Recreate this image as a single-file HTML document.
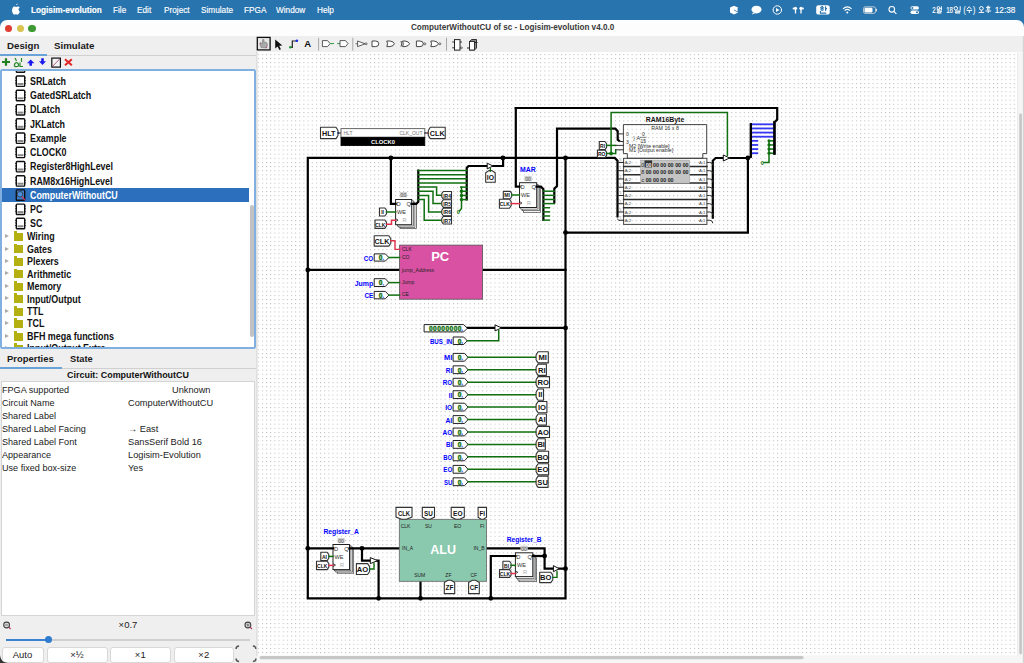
<!DOCTYPE html>
<html><head><meta charset="utf-8">
<style>
*{margin:0;padding:0;box-sizing:border-box}
html,body{width:1024px;height:663px;overflow:hidden;background:#ececec;font-family:"Liberation Sans",sans-serif;color:#222}
.a{position:absolute}
#menubar{left:0;top:0;width:1024px;height:19px;background:#2874ae;color:#fff;font-size:8.8px}
#menubar span{position:absolute;top:4.8px;line-height:10px;white-space:nowrap;transform:scaleX(0.935);transform-origin:0 0;-webkit-text-stroke:0.15px #fff}
#titlebar{left:0;top:19.5px;width:1024px;height:17px;background:#fdfdfd;border-bottom:0.6px solid #e6e6e6;border-radius:7px 7px 0 0}
.tl{position:absolute;top:24.5px;width:7.4px;height:7.4px;border-radius:50%}
#title{position:absolute;left:411px;top:22.3px;font-size:8.9px;font-weight:bold;color:#3a3a3a;line-height:11px;white-space:nowrap;transform:scaleX(0.914);transform-origin:0 0}
#left{left:0;top:36px;width:256px;height:627px;background:#efefef}
.tab{position:absolute;font-weight:bold;font-size:9.7px;color:#1a1a1a;line-height:12px}
#list{left:0;top:69px;width:256px;height:280px;border:2px solid #7fb0e0;border-radius:2px}
#listwrap{background:#fff}
.li{position:absolute;left:30px;font-size:10.1px;font-weight:bold;color:#111;line-height:12px;white-space:nowrap;transform:scaleX(0.88);transform-origin:0 0;margin-top:0.7px}
.fo{position:absolute;left:27px;font-size:10.1px;font-weight:bold;color:#111;line-height:12px;white-space:nowrap;transform:scaleX(0.886);transform-origin:0 0;margin-top:0.5px}
.ic{position:absolute;left:15px;width:9px;height:10px;border:1.6px solid #222;border-radius:1px;background:#fff}
.fic{position:absolute;left:13.9px;width:9.1px;height:8px;background:#b4b012}
.fic:before{content:'';position:absolute;left:0;top:-1.8px;width:3.3px;height:2px;background:#b4b012}
.arr{position:absolute;left:4.6px;width:0;height:0;border-left:4.5px solid #aaa;border-top:2.4px solid transparent;border-bottom:2.4px solid transparent}
.pr{position:absolute;left:2px;font-size:9.9px;color:#1a1a1a;line-height:11px;white-space:nowrap;transform:scaleX(0.92);transform-origin:0 0}
.pv{position:absolute;left:128px;font-size:9.9px;color:#1a1a1a;line-height:11px;white-space:nowrap;transform:scaleX(0.935);transform-origin:0 0}
.btn{position:absolute;top:647px;height:16px;background:#fff;border:1px solid #d8d8d8;border-radius:3px;font-size:9.5px;text-align:center;line-height:14px;color:#222}
#canvas{left:257px;top:52px;width:767px;height:611px;background:#fff}
#toolbar{left:256px;top:36px;width:768px;height:17px;background:#efefef;border-bottom:1px solid #d0d0d0}
</style></head><body>
<div id="menubar" class="a">
<span style="left:31.2px;font-weight:bold">Logisim-evolution</span>
<span style="left:112.7px">File</span>
<span style="left:136.7px">Edit</span>
<span style="left:163.7px">Project</span>
<span style="left:200.7px">Simulate</span>
<span style="left:244.2px">FPGA</span>
<span style="left:276.2px">Window</span>
<span style="left:317.2px">Help</span>
</div>
<div class="a" style="left:0;top:19px;width:1024px;height:8px;background:#2874ae"></div>
<div id="titlebar" class="a"></div>
<div class="tl" style="left:4.8px;background:#e03c30"></div>
<div class="tl" style="left:16.6px;background:#d8c44e"></div>
<div class="tl" style="left:28.3px;background:#3d9a32"></div>
<div id="title">ComputerWithoutCU of sc - Logisim-evolution v4.0.0</div>

<div id="left" class="a">
</div>
<div class="tab" style="left:7px;top:40px">Design</div>
<div class="tab" style="left:54px;top:40px">Simulate</div>
<div class="a" style="left:0;top:54px;width:47px;height:2px;background:#6aa3d8"></div>
<div class="a" style="left:47px;top:55px;width:209px;height:1px;background:#d0d0d0"></div>

<div id="listwrap" class="a" style="left:0;top:69px;width:256px;height:280px;overflow:hidden">
<div class="a" style="left:0;top:-69px;width:256px;height:663px">
<div class="a" style="left:2px;top:188.2px;width:246.5px;height:13.5px;background:#2c6fbd"></div>

<div class="li" style="top:75.2px;color:#111">SRLatch</div>
<div class="li" style="top:89.5px;color:#111">GatedSRLatch</div>
<div class="li" style="top:103.8px;color:#111">DLatch</div>
<div class="li" style="top:118.0px;color:#111">JKLatch</div>
<div class="li" style="top:132.2px;color:#111">Example</div>
<div class="li" style="top:146.4px;color:#111">CLOCK0</div>
<div class="li" style="top:160.7px;color:#111">Register8HighLevel</div>
<div class="li" style="top:174.9px;color:#111">RAM8x16HighLevel</div>
<div class="li" style="top:189.1px;color:#fff">ComputerWithoutCU</div>
<div class="li" style="top:203.3px;color:#111">PC</div>
<div class="li" style="top:217.5px;color:#111">SC</div>
<div class="arr" style="top:234.1px"></div><div class="fic" style="top:233.0px"></div><div class="fo" style="top:230.8px">Wiring</div>
<div class="arr" style="top:246.5px"></div><div class="fic" style="top:245.4px"></div><div class="fo" style="top:243.2px">Gates</div>
<div class="arr" style="top:259.0px"></div><div class="fic" style="top:257.9px"></div><div class="fo" style="top:255.7px">Plexers</div>
<div class="arr" style="top:271.4px"></div><div class="fic" style="top:270.3px"></div><div class="fo" style="top:268.1px">Arithmetic</div>
<div class="arr" style="top:283.9px"></div><div class="fic" style="top:282.8px"></div><div class="fo" style="top:280.6px">Memory</div>
<div class="arr" style="top:296.3px"></div><div class="fic" style="top:295.2px"></div><div class="fo" style="top:293.0px">Input/Output</div>
<div class="arr" style="top:308.8px"></div><div class="fic" style="top:307.7px"></div><div class="fo" style="top:305.5px">TTL</div>
<div class="arr" style="top:321.2px"></div><div class="fic" style="top:320.1px"></div><div class="fo" style="top:317.9px">TCL</div>
<div class="arr" style="top:333.7px"></div><div class="fic" style="top:332.6px"></div><div class="fo" style="top:330.4px">BFH mega functions</div>
<div class="arr" style="top:346.1px"></div><div class="fic" style="top:345.0px"></div><div class="fo" style="top:342.8px">Input/Output Extra</div>
<div class="a" style="left:249.5px;top:204.5px;width:4px;height:132px;border-radius:2px;background:#c2c2c2"></div>
</div></div>
<div id="list" class="a"></div>

<div class="tab" style="left:7px;top:353px;font-size:9.45px">Properties</div>
<div class="tab" style="left:70px;top:353px;font-size:9.3px">State</div>
<div class="a" style="left:0;top:367px;width:62px;height:2px;background:#6aa3d8"></div>
<div class="a" style="left:62px;top:368px;width:194px;height:1px;background:#d0d0d0"></div>
<div class="a" style="left:0;top:369px;width:256px;text-align:center;font-size:8.93px;font-weight:bold;line-height:12px;color:#111">Circuit: ComputerWithoutCU</div>
<div class="a" style="left:1px;top:381px;width:254px;height:235px;background:#fff;border:1px solid #d4d4d4"></div>
<div class="pr" style="top:383.5px">FPGA supported</div><div class="pv" style="top:383.5px;left:172px">Unknown</div>
<div class="pr" style="top:396.5px">Circuit Name</div><div class="pv" style="top:396.5px">ComputerWithoutCU</div>
<div class="pr" style="top:409.5px">Shared Label</div>
<div class="pr" style="top:422.5px">Shared Label Facing</div><div class="pv" style="top:422.5px">&#8594; East</div>
<div class="pr" style="top:435.5px">Shared Label Font</div><div class="pv" style="top:435.5px">SansSerif Bold 16</div>
<div class="pr" style="top:448.5px">Appearance</div><div class="pv" style="top:448.5px">Logisim-Evolution</div>
<div class="pr" style="top:461.5px">Use fixed box-size</div><div class="pv" style="top:461.5px">Yes</div>

<div class="a" style="left:0;top:619px;width:256px;text-align:center;font-size:9.5px;line-height:12px">×0.7</div>
<div class="a" style="left:6px;top:639px;width:244px;height:1.5px;background:#cfcfcf"></div>
<div class="a" style="left:6px;top:639px;width:42px;height:1.5px;background:#3b82d0"></div>
<div class="a" style="left:44.5px;top:636px;width:7px;height:7px;border-radius:50%;background:#2f7bd0"></div>
<div class="btn" style="left:1.5px;width:42px">Auto</div>
<div class="btn" style="left:46.5px;width:61px">×½</div>
<div class="btn" style="left:110px;width:60.5px">×1</div>
<div class="btn" style="left:173.5px;width:60.5px">×2</div>

<div id="toolbar" class="a"></div>
<div id="canvas" class="a"></div>





































<!--SVG--><svg class="a" style="left:0;top:0" width="1024" height="663" viewBox="0 0 1024 663" font-family="Liberation Sans, sans-serif">
<defs><pattern id="g" x="257.75" y="53.95" width="4.154" height="4.154" patternUnits="userSpaceOnUse"><rect x="0" y="0" width="1" height="1" fill="#b8b8b8"/></pattern></defs>
<rect x="257.5" y="52.7" width="759.5" height="602" fill="url(#g)"/>
<rect x="400.40000000000003" y="203.4" width="16.10" height="25.20" fill="#fff" stroke="#333" stroke-width="0.65" />
<rect x="398.8" y="202.1" width="16.10" height="25.20" fill="#fff" stroke="#333" stroke-width="0.65" />
<rect x="397.20000000000005" y="200.8" width="16.10" height="25.20" fill="#fff" stroke="#333" stroke-width="0.65" />
<rect x="395.6" y="199.5" width="16.10" height="25.20" fill="#fff" stroke="#222" stroke-width="1" />
<text x="398.6" y="204.0" font-size="5.8" font-weight="normal" fill="#333" text-anchor="middle" dominant-baseline="central" >D</text>
<text x="408.7" y="204.0" font-size="5.8" font-weight="normal" fill="#333" text-anchor="middle" dominant-baseline="central" >Q</text>
<text x="397.1" y="212.1" font-size="5.6" font-weight="normal" fill="#333" text-anchor="start" dominant-baseline="central" >WE</text>
<text x="404.455" y="220.164" font-size="5.6" font-weight="normal" fill="#aaa" text-anchor="middle" dominant-baseline="central" >R</text>
<polyline points="395.6,218.652 398.1,220.164 395.6,221.676" fill="none" stroke="#222" stroke-width="0.8"/>
<rect x="523.4" y="187.5" width="17.20" height="24.80" fill="#fff" stroke="#333" stroke-width="0.65" />
<rect x="522.1" y="185.89999999999998" width="17.20" height="24.80" fill="#fff" stroke="#333" stroke-width="0.65" />
<rect x="520.8" y="184.29999999999998" width="17.20" height="24.80" fill="#fff" stroke="#333" stroke-width="0.65" />
<rect x="519.5" y="182.7" width="17.20" height="24.80" fill="#fff" stroke="#222" stroke-width="1" />
<text x="522.5" y="187.2" font-size="5.8" font-weight="normal" fill="#333" text-anchor="middle" dominant-baseline="central" >D</text>
<text x="533.7" y="187.2" font-size="5.8" font-weight="normal" fill="#333" text-anchor="middle" dominant-baseline="central" >Q</text>
<text x="521.0" y="195.1" font-size="5.6" font-weight="normal" fill="#333" text-anchor="start" dominant-baseline="central" >WE</text>
<text x="528.96" y="203.036" font-size="5.6" font-weight="normal" fill="#aaa" text-anchor="middle" dominant-baseline="central" >R</text>
<polyline points="519.5,201.548 522.0,203.036 519.5,204.524" fill="none" stroke="#222" stroke-width="0.8"/>
<rect x="337.2" y="548.1" width="16.50" height="25.10" fill="#fff" stroke="#333" stroke-width="0.65" />
<rect x="335.8" y="546.9" width="16.50" height="25.10" fill="#fff" stroke="#333" stroke-width="0.65" />
<rect x="334.4" y="545.7" width="16.50" height="25.10" fill="#fff" stroke="#333" stroke-width="0.65" />
<rect x="333" y="544.5" width="16.50" height="25.10" fill="#fff" stroke="#222" stroke-width="1" />
<text x="336" y="549.0" font-size="5.8" font-weight="normal" fill="#333" text-anchor="middle" dominant-baseline="central" >D</text>
<text x="346.5" y="549.0" font-size="5.8" font-weight="normal" fill="#333" text-anchor="middle" dominant-baseline="central" >Q</text>
<text x="334.5" y="557.05" font-size="5.6" font-weight="normal" fill="#333" text-anchor="start" dominant-baseline="central" >WE</text>
<text x="342.075" y="565.082" font-size="5.6" font-weight="normal" fill="#aaa" text-anchor="middle" dominant-baseline="central" >R</text>
<polyline points="333,563.576 335.5,565.082 333,566.588" fill="none" stroke="#222" stroke-width="0.8"/>
<rect x="519.0" y="557.9" width="17.40" height="23.80" fill="#fff" stroke="#333" stroke-width="0.65" />
<rect x="517.8" y="556.1999999999999" width="17.40" height="23.80" fill="#fff" stroke="#333" stroke-width="0.65" />
<rect x="516.6" y="554.5" width="17.40" height="23.80" fill="#fff" stroke="#333" stroke-width="0.65" />
<rect x="515.4" y="552.8" width="17.40" height="23.80" fill="#fff" stroke="#222" stroke-width="1" />
<text x="518.4" y="557.3" font-size="5.8" font-weight="normal" fill="#333" text-anchor="middle" dominant-baseline="central" >D</text>
<text x="529.8" y="557.3" font-size="5.8" font-weight="normal" fill="#333" text-anchor="middle" dominant-baseline="central" >Q</text>
<text x="516.9" y="564.7" font-size="5.6" font-weight="normal" fill="#333" text-anchor="start" dominant-baseline="central" >WE</text>
<text x="524.9699999999999" y="572.316" font-size="5.6" font-weight="normal" fill="#aaa" text-anchor="middle" dominant-baseline="central" >R</text>
<polyline points="515.4,570.888 517.9,572.316 515.4,573.744" fill="none" stroke="#222" stroke-width="0.8"/>
<polygon points="320.5,127.3 336.0,127.3 338.0,130.464 338.0,135.43599999999998 336.0,138.6 320.5,138.6" fill="#fff" stroke="#333" stroke-width="1.1" stroke-linejoin="round"/>
<text x="328.75" y="133.25" font-size="7.2" font-weight="bold" fill="#111" text-anchor="middle" dominant-baseline="central" >HLT</text>
<circle cx="338" cy="133" r="0.9" fill="#3a6fd0"/>
<path d="M338,133 H341" fill="none" stroke="#000" stroke-width="1"  stroke-linejoin="miter" stroke-linecap="square"/>
<rect x="341" y="128.6" width="83.80" height="8.70" fill="#fff" stroke="#666" stroke-width="1" />
<rect x="341" y="137.3" width="83.80" height="8.30" fill="#000" stroke="#000" stroke-width="0.8" />
<text x="343.5" y="133.2" font-size="5" font-weight="normal" fill="#777" text-anchor="start" dominant-baseline="central" >HLT</text>
<text x="422.5" y="133.2" font-size="5" font-weight="normal" fill="#777" text-anchor="end" dominant-baseline="central" >CLK_OUT</text>
<text x="383" y="141.6" font-size="5.8" font-weight="bold" fill="#fff" text-anchor="middle" dominant-baseline="central" >CLOCK0</text>
<path d="M424.8,133 H428.3" fill="none" stroke="#000" stroke-width="1"  stroke-linejoin="miter" stroke-linecap="square"/>
<circle cx="428.3" cy="133" r="0.9" fill="#e0304a"/>
<polygon points="430.3,127.3 445.2,127.3 445.2,138.6 430.3,138.6 428.3,135.43599999999998 428.3,130.464" fill="#fff" stroke="#333" stroke-width="1.1" stroke-linejoin="round"/>
<text x="437.25" y="133.25" font-size="7.2" font-weight="bold" fill="#111" text-anchor="middle" dominant-baseline="central" >CLK</text>
<path d="M307.8,598.3 V157.9 H614.8 L617.5,160.8 V217.5" fill="none" stroke="#000" stroke-width="2.2" stroke-linejoin="miter"/>
<path d="M565.5,157.9 V598.3 H307.8" fill="none" stroke="#000" stroke-width="2.2"  stroke-linejoin="miter" stroke-linecap="square"/>
<path d="M565.5,232.6 H747.9 V158" fill="none" stroke="#000" stroke-width="2.2"  stroke-linejoin="miter" stroke-linecap="square"/>
<path d="M307.8,269.9 H399.6 M482.6,269.9 H565.5" fill="none" stroke="#000" stroke-width="2.2"  stroke-linejoin="miter" stroke-linecap="square"/>
<path d="M467.3,327.9 H495 M501.3,327.9 H565.6" fill="none" stroke="#000" stroke-width="2.2"  stroke-linejoin="miter" stroke-linecap="square"/>
<path d="M390.9,157.9 V203.9 H395.6" fill="none" stroke="#000" stroke-width="2.2"  stroke-linejoin="miter" stroke-linecap="square"/>
<path d="M411.7,203.9 H416.3 L418.3,201.9 V170.5" fill="none" stroke="#000" stroke-width="2.2"  stroke-linejoin="miter" stroke-linecap="square"/>
<path d="M466.7,199.5 V168 L468.5,166 H487.2 M493,166 H503.1 V157.9" fill="none" stroke="#000" stroke-width="2.2"  stroke-linejoin="miter" stroke-linecap="square"/>
<polygon points="487.2,163.2 493,166 487.2,168.8" fill="#fff" stroke="#111" stroke-width="1"/>
<path d="M515.8,108 V186.7 H519.5" fill="none" stroke="#000" stroke-width="2.2"  stroke-linejoin="miter" stroke-linecap="square"/>
<path d="M515.8,108 H777.2 V119.6 L774.6,122.2 V153.6" fill="none" stroke="#000" stroke-width="2.2"  stroke-linejoin="miter" stroke-linecap="square"/>
<path d="M536.7,186.7 H541 L543.4,189.1 V219.8" fill="none" stroke="#000" stroke-width="2.2"  stroke-linejoin="miter" stroke-linecap="square"/>
<path d="M554.3,203.6 V188.6 L557,186 V128.7 H615.4 L617.7,131.2 V139.7 L619.8,141.4" fill="none" stroke="#000" stroke-width="2.2" stroke-linejoin="miter"/>
<path d="M618,133.9 H623.4 M619.8,141.5 H623.4" fill="none" stroke="#333" stroke-width="1"  stroke-linejoin="miter" stroke-linecap="square"/>
<path d="M712.8,218.8 V160.8 L715.6,158 H723.3 M729.2,158 H747.9" fill="none" stroke="#000" stroke-width="2.2" stroke-linejoin="miter"/>
<polygon points="723.3,155.0 729.5,158 723.3,161.0" fill="#fff" stroke="#111" stroke-width="1"/>
<path d="M750.9,124.3 V156.6 L748.5,158" fill="none" stroke="#000" stroke-width="2.2"  stroke-linejoin="miter" stroke-linecap="square"/>
<path d="M307.8,548.3 H333 M349.5,548.3 H399.8 M362,548.3 V560.6 H370.3 M377.2,560.6 H378.6 V598.3" fill="none" stroke="#000" stroke-width="2.2"  stroke-linejoin="miter" stroke-linecap="square"/>
<polygon points="370.3,557.6 377.6,560.6 370.3,563.6" fill="#fff" stroke="#111" stroke-width="1"/>
<path d="M420.5,581.3 V598.3" fill="none" stroke="#000" stroke-width="2.2"  stroke-linejoin="miter" stroke-linecap="square"/>
<path d="M486.5,548.3 H544.6 V568.7 H553.6 M558.8,568.7 H565.5" fill="none" stroke="#000" stroke-width="2.2"  stroke-linejoin="miter" stroke-linecap="square"/>
<polygon points="553.4,565.7 559.2,568.7 553.4,571.7" fill="#fff" stroke="#111" stroke-width="1"/>
<path d="M532.8,556 H544.6" fill="none" stroke="#000" stroke-width="2.2"  stroke-linejoin="miter" stroke-linecap="square"/>
<path d="M490.8,598.3 V556 H515.4" fill="none" stroke="#000" stroke-width="2.2"  stroke-linejoin="miter" stroke-linecap="square"/>
<polygon points="495,324.9 501.5,327.9 495,330.9" fill="#fff" stroke="#111" stroke-width="1"/>
<circle cx="390.9" cy="157.9" r="2.4" fill="#000"/>
<circle cx="502.9" cy="157.9" r="2.4" fill="#000"/>
<circle cx="565.5" cy="157.9" r="2.4" fill="#000"/>
<circle cx="565.5" cy="232.6" r="2.4" fill="#000"/>
<circle cx="307.8" cy="269.9" r="2.4" fill="#000"/>
<circle cx="565.6" cy="327.9" r="2.4" fill="#000"/>
<circle cx="307.8" cy="548.3" r="2.4" fill="#000"/>
<circle cx="362" cy="548.3" r="2.4" fill="#000"/>
<circle cx="378.6" cy="598.3" r="2.4" fill="#000"/>
<circle cx="420.5" cy="598.3" r="2.4" fill="#000"/>
<circle cx="490.8" cy="598.3" r="2.4" fill="#000"/>
<circle cx="544.6" cy="556" r="2.4" fill="#000"/>
<circle cx="565.5" cy="568.7" r="2.4" fill="#000"/>
<circle cx="747.9" cy="158" r="2.4" fill="#000"/>
<rect x="399.79999999999995" y="192.1" width="7.20" height="5.20" fill="#cfcfcf" stroke="none" stroke-width="0" />
<text x="403.4" y="194.89999999999998" font-size="5" font-weight="normal" fill="#555" text-anchor="middle" dominant-baseline="central" >00</text>
<path d="M418.3,170.50 H466.7" fill="none" stroke="#107010" stroke-width="1.5"  stroke-linejoin="miter" stroke-linecap="square"/>
<path d="M418.3,174.65 H466.7" fill="none" stroke="#107010" stroke-width="1.5"  stroke-linejoin="miter" stroke-linecap="square"/>
<path d="M418.3,178.81 H466.7" fill="none" stroke="#107010" stroke-width="1.5"  stroke-linejoin="miter" stroke-linecap="square"/>
<path d="M418.3,182.96 H466.7" fill="none" stroke="#107010" stroke-width="1.5"  stroke-linejoin="miter" stroke-linecap="square"/>
<path d="M418.3,187.12 H436.6 V195.3 H441.8" fill="none" stroke="#107010" stroke-width="1.5"  stroke-linejoin="miter" stroke-linecap="square"/>
<polygon points="443.32,191.5 451.5,191.5 451.5,199.10000000000002 443.32,199.10000000000002 441.8,196.972 441.8,193.62800000000001" fill="#fff" stroke="#333" stroke-width="1.1" stroke-linejoin="round"/>
<text x="447.03" y="195.60000000000002" font-size="5" font-weight="bold" fill="#111" text-anchor="middle" dominant-baseline="central" >IR4</text>
<path d="M418.3,191.27 H433 V203.6 H441.8" fill="none" stroke="#107010" stroke-width="1.5"  stroke-linejoin="miter" stroke-linecap="square"/>
<polygon points="443.32,199.79999999999998 451.5,199.79999999999998 451.5,207.4 443.32,207.4 441.8,205.272 441.8,201.928" fill="#fff" stroke="#333" stroke-width="1.1" stroke-linejoin="round"/>
<text x="447.03" y="203.9" font-size="5" font-weight="bold" fill="#111" text-anchor="middle" dominant-baseline="central" >IR5</text>
<path d="M418.3,195.42 H428.6 V211.9 H441.8" fill="none" stroke="#107010" stroke-width="1.5"  stroke-linejoin="miter" stroke-linecap="square"/>
<polygon points="443.32,208.1 451.5,208.1 451.5,215.70000000000002 443.32,215.70000000000002 441.8,213.572 441.8,210.228" fill="#fff" stroke="#333" stroke-width="1.1" stroke-linejoin="round"/>
<text x="447.03" y="212.20000000000002" font-size="5" font-weight="bold" fill="#111" text-anchor="middle" dominant-baseline="central" >IR6</text>
<path d="M418.3,199.58 H424.2 V220.2 H441.8" fill="none" stroke="#107010" stroke-width="1.5"  stroke-linejoin="miter" stroke-linecap="square"/>
<polygon points="443.32,216.39999999999998 451.5,216.39999999999998 451.5,224.0 443.32,224.0 441.8,221.87199999999999 441.8,218.528" fill="#fff" stroke="#333" stroke-width="1.1" stroke-linejoin="round"/>
<text x="447.03" y="220.5" font-size="5" font-weight="bold" fill="#111" text-anchor="middle" dominant-baseline="central" >IR7</text>
<path d="M460.8,187.12 H466.7" fill="none" stroke="#107010" stroke-width="1.5"  stroke-linejoin="miter" stroke-linecap="square"/>
<path d="M460.8,191.27 H466.7" fill="none" stroke="#107010" stroke-width="1.5"  stroke-linejoin="miter" stroke-linecap="square"/>
<path d="M460.8,195.42 H466.7" fill="none" stroke="#107010" stroke-width="1.5"  stroke-linejoin="miter" stroke-linecap="square"/>
<path d="M460.8,199.58 H466.7" fill="none" stroke="#107010" stroke-width="1.5"  stroke-linejoin="miter" stroke-linecap="square"/>
<path d="M461.5,187.12 V208.6 L459.5,211" fill="none" stroke="#107010" stroke-width="1.5"  stroke-linejoin="miter" stroke-linecap="square"/>
<circle cx="461.5" cy="191.27" r="1.7" fill="#107010"/>
<circle cx="461.5" cy="195.424" r="1.7" fill="#107010"/>
<circle cx="461.5" cy="199.578" r="1.7" fill="#107010"/>
<text x="458.3" y="211.5" font-size="5.5" font-weight="bold" fill="#107010" text-anchor="middle" dominant-baseline="central" >0</text>
<polygon points="485.7,182.2 495.2,182.2 495.2,172.79999999999998 491.875,170.6 489.025,170.6 485.7,172.79999999999998" fill="#fff" stroke="#333" stroke-width="1.1" stroke-linejoin="miter"/>
<text x="490.45" y="177.29999999999998" font-size="7.4" font-weight="bold" fill="#111" text-anchor="middle" dominant-baseline="central"  textLength="7.2" lengthAdjust="spacingAndGlyphs">IO</text>
<path d="M490.4,171.2 V168.5" fill="none" stroke="#107010" stroke-width="1.3"  stroke-linejoin="miter" stroke-linecap="square"/>
<polygon points="379.5,208 384.9,208 386.5,210.24 386.5,213.76 384.9,216 379.5,216" fill="#fff" stroke="#333" stroke-width="1.1" stroke-linejoin="round"/>
<text x="382.6" y="212.3" font-size="5" font-weight="bold" fill="#111" text-anchor="middle" dominant-baseline="central" >II</text>
<path d="M386.5,212 H395.6" fill="none" stroke="#107010" stroke-width="1.5"  stroke-linejoin="miter" stroke-linecap="square"/>
<polygon points="375,220 384.82,220 386.5,222.35199999999998 386.5,226.048 384.82,228.4 375,228.4" fill="#fff" stroke="#333" stroke-width="1.1" stroke-linejoin="round"/>
<text x="380.33" y="224.5" font-size="5" font-weight="bold" fill="#111" text-anchor="middle" dominant-baseline="central" >CLK</text>
<path d="M386.5,224.3 H391.5 V220.3 H395.6" fill="none" stroke="#e0304a" stroke-width="1.5"  stroke-linejoin="miter" stroke-linecap="square"/>
<rect x="524.5" y="176.0" width="7.20" height="5.20" fill="#cfcfcf" stroke="none" stroke-width="0" />
<text x="528.1" y="178.79999999999998" font-size="5" font-weight="normal" fill="#555" text-anchor="middle" dominant-baseline="central" >00</text>
<text x="527.9" y="169.8" font-size="7.4" font-weight="bold" fill="#0000ff" text-anchor="middle" dominant-baseline="central"  textLength="15.7" lengthAdjust="spacingAndGlyphs">MAR</text>
<path d="M543.6,191.20 H554.3" fill="none" stroke="#107010" stroke-width="1.5"  stroke-linejoin="miter" stroke-linecap="square"/>
<path d="M543.6,195.33 H554.3" fill="none" stroke="#107010" stroke-width="1.5"  stroke-linejoin="miter" stroke-linecap="square"/>
<path d="M543.6,199.46 H554.3" fill="none" stroke="#107010" stroke-width="1.5"  stroke-linejoin="miter" stroke-linecap="square"/>
<path d="M543.6,203.59 H554.3" fill="none" stroke="#107010" stroke-width="1.5"  stroke-linejoin="miter" stroke-linecap="square"/>
<path d="M543.6,207.72 H549.4" fill="none" stroke="#107010" stroke-width="1.5"  stroke-linejoin="miter" stroke-linecap="square"/>
<path d="M543.6,211.85 H549.4" fill="none" stroke="#107010" stroke-width="1.5"  stroke-linejoin="miter" stroke-linecap="square"/>
<path d="M543.6,215.98 H549.4" fill="none" stroke="#107010" stroke-width="1.5"  stroke-linejoin="miter" stroke-linecap="square"/>
<path d="M543.6,220.11 H549.4" fill="none" stroke="#107010" stroke-width="1.5"  stroke-linejoin="miter" stroke-linecap="square"/>
<polygon points="503.3,191.4 510.24,191.4 511.7,193.44400000000002 511.7,196.656 510.24,198.7 503.3,198.7" fill="#fff" stroke="#333" stroke-width="1.1" stroke-linejoin="round"/>
<text x="507.135" y="195.35000000000002" font-size="5" font-weight="bold" fill="#111" text-anchor="middle" dominant-baseline="central" >MI</text>
<path d="M511.7,195 H519.5" fill="none" stroke="#107010" stroke-width="1.5"  stroke-linejoin="miter" stroke-linecap="square"/>
<polygon points="499.4,199.2 509.4,199.2 511.2,201.72 511.2,205.67999999999998 509.4,208.2 499.4,208.2" fill="#fff" stroke="#333" stroke-width="1.1" stroke-linejoin="round"/>
<text x="504.84999999999997" y="204.0" font-size="5" font-weight="bold" fill="#111" text-anchor="middle" dominant-baseline="central" >CLK</text>
<path d="M511.2,203.6 H519.5" fill="none" stroke="#e0304a" stroke-width="1.5"  stroke-linejoin="miter" stroke-linecap="square"/>
<text x="665" y="119.3" font-size="7.2" font-weight="bold" fill="#111" text-anchor="middle" dominant-baseline="central"  textLength="38.5" lengthAdjust="spacingAndGlyphs">RAM16Byte</text>
<polygon points="623.4,124.6 706.7,124.6 706.7,153.6 702.8,153.6 702.8,158.3 627.3,158.3 627.3,153.6 623.4,153.6" fill="none" stroke="#444" stroke-width="1"/>
<text x="665" y="128.3" font-size="5.3" font-weight="normal" fill="#333" text-anchor="middle" dominant-baseline="central" >RAM 16 x 8</text>
<text x="626" y="134" font-size="5" font-weight="normal" fill="#333" text-anchor="start" dominant-baseline="central" >0</text>
<text x="626" y="141.8" font-size="5" font-weight="normal" fill="#333" text-anchor="start" dominant-baseline="central" >3</text>
<text x="633" y="137.5" font-size="6" font-weight="normal" fill="#555" text-anchor="start" dominant-baseline="central" >}</text>
<text x="636.5" y="137.8" font-size="5.5" font-weight="normal" fill="#333" text-anchor="start" dominant-baseline="central" >A</text>
<path d="M640.5,137.3 H646" fill="none" stroke="#333" stroke-width="0.6"  stroke-linejoin="miter" stroke-linecap="square"/>
<text x="643.3" y="133.8" font-size="5" font-weight="normal" fill="#333" text-anchor="middle" dominant-baseline="central" >0</text>
<text x="643.3" y="141.2" font-size="5" font-weight="normal" fill="#333" text-anchor="middle" dominant-baseline="central" >15</text>
<text x="629" y="145.5" font-size="5.2" font-weight="normal" fill="#333" text-anchor="start" dominant-baseline="central" >M2 [Write enable]</text>
<text x="629" y="150" font-size="5.2" font-weight="normal" fill="#333" text-anchor="start" dominant-baseline="central" >M1 [Output enable]</text>
<rect x="623.6" y="158.3" width="83.30" height="66.10" fill="none" stroke="#444" stroke-width="1" />
<path d="M623.6,166.56 H706.9" fill="none" stroke="#2a2a2a" stroke-width="1.5"  stroke-linejoin="miter" stroke-linecap="square"/>
<path d="M623.6,174.82 H706.9" fill="none" stroke="#2a2a2a" stroke-width="1.5"  stroke-linejoin="miter" stroke-linecap="square"/>
<path d="M623.6,183.08 H706.9" fill="none" stroke="#2a2a2a" stroke-width="1.5"  stroke-linejoin="miter" stroke-linecap="square"/>
<path d="M623.6,191.34 H706.9" fill="none" stroke="#2a2a2a" stroke-width="1.5"  stroke-linejoin="miter" stroke-linecap="square"/>
<path d="M623.6,199.60 H706.9" fill="none" stroke="#2a2a2a" stroke-width="1.5"  stroke-linejoin="miter" stroke-linecap="square"/>
<path d="M623.6,207.86 H706.9" fill="none" stroke="#2a2a2a" stroke-width="1.5"  stroke-linejoin="miter" stroke-linecap="square"/>
<path d="M623.6,216.12 H706.9" fill="none" stroke="#2a2a2a" stroke-width="1.5"  stroke-linejoin="miter" stroke-linecap="square"/>
<text x="624.7" y="162.63" font-size="4.3" font-weight="normal" fill="#444" text-anchor="start" dominant-baseline="central" >A,2</text>
<text x="705.5" y="162.63" font-size="4.3" font-weight="normal" fill="#444" text-anchor="end" dominant-baseline="central" >A,1</text>
<path d="M617.5,161.23 L618.8,162.43 H623.6" fill="none" stroke="#222" stroke-width="1"  stroke-linejoin="miter" stroke-linecap="square"/>
<path d="M706.9,162.43 H709.8 Q712.6,162.43 712.8,165.43" fill="none" stroke="#333" stroke-width="1" stroke-linejoin="round"/>
<text x="620.6" y="160.23000000000002" font-size="2.8" font-weight="normal" fill="#888" text-anchor="middle" dominant-baseline="central" >0</text>
<text x="624.7" y="170.89" font-size="4.3" font-weight="normal" fill="#444" text-anchor="start" dominant-baseline="central" >A,2</text>
<text x="705.5" y="170.89" font-size="4.3" font-weight="normal" fill="#444" text-anchor="end" dominant-baseline="central" >A,1</text>
<path d="M617.5,169.49 L618.8,170.69 H623.6" fill="none" stroke="#222" stroke-width="1"  stroke-linejoin="miter" stroke-linecap="square"/>
<path d="M706.9,170.69 H709.8 Q712.6,170.69 712.8,173.69" fill="none" stroke="#333" stroke-width="1" stroke-linejoin="round"/>
<text x="620.6" y="168.49" font-size="2.8" font-weight="normal" fill="#888" text-anchor="middle" dominant-baseline="central" >1</text>
<text x="624.7" y="179.15" font-size="4.3" font-weight="normal" fill="#444" text-anchor="start" dominant-baseline="central" >A,2</text>
<text x="705.5" y="179.15" font-size="4.3" font-weight="normal" fill="#444" text-anchor="end" dominant-baseline="central" >A,1</text>
<path d="M617.5,177.75 L618.8,178.95 H623.6" fill="none" stroke="#222" stroke-width="1"  stroke-linejoin="miter" stroke-linecap="square"/>
<path d="M706.9,178.95 H709.8 Q712.6,178.95 712.8,181.95" fill="none" stroke="#333" stroke-width="1" stroke-linejoin="round"/>
<text x="620.6" y="176.75000000000003" font-size="2.8" font-weight="normal" fill="#888" text-anchor="middle" dominant-baseline="central" >2</text>
<text x="624.7" y="187.41" font-size="4.3" font-weight="normal" fill="#444" text-anchor="start" dominant-baseline="central" >A,2</text>
<text x="705.5" y="187.41" font-size="4.3" font-weight="normal" fill="#444" text-anchor="end" dominant-baseline="central" >A,1</text>
<path d="M617.5,186.01 L618.8,187.21 H623.6" fill="none" stroke="#222" stroke-width="1"  stroke-linejoin="miter" stroke-linecap="square"/>
<path d="M706.9,187.21 H709.8 Q712.6,187.21 712.8,190.21" fill="none" stroke="#333" stroke-width="1" stroke-linejoin="round"/>
<text x="620.6" y="185.01000000000002" font-size="2.8" font-weight="normal" fill="#888" text-anchor="middle" dominant-baseline="central" >3</text>
<text x="624.7" y="195.67000000000002" font-size="4.3" font-weight="normal" fill="#444" text-anchor="start" dominant-baseline="central" >A,2</text>
<text x="705.5" y="195.67000000000002" font-size="4.3" font-weight="normal" fill="#444" text-anchor="end" dominant-baseline="central" >A,1</text>
<path d="M617.5,194.27 L618.8,195.47 H623.6" fill="none" stroke="#222" stroke-width="1"  stroke-linejoin="miter" stroke-linecap="square"/>
<path d="M706.9,195.47 H709.8 Q712.6,195.47 712.8,198.47" fill="none" stroke="#333" stroke-width="1" stroke-linejoin="round"/>
<text x="620.6" y="193.27000000000004" font-size="2.8" font-weight="normal" fill="#888" text-anchor="middle" dominant-baseline="central" >4</text>
<text x="624.7" y="203.93" font-size="4.3" font-weight="normal" fill="#444" text-anchor="start" dominant-baseline="central" >A,2</text>
<text x="705.5" y="203.93" font-size="4.3" font-weight="normal" fill="#444" text-anchor="end" dominant-baseline="central" >A,1</text>
<path d="M617.5,202.53 L618.8,203.73 H623.6" fill="none" stroke="#222" stroke-width="1"  stroke-linejoin="miter" stroke-linecap="square"/>
<path d="M706.9,203.73 H709.8 Q712.6,203.73 712.8,206.73" fill="none" stroke="#333" stroke-width="1" stroke-linejoin="round"/>
<text x="620.6" y="201.53000000000003" font-size="2.8" font-weight="normal" fill="#888" text-anchor="middle" dominant-baseline="central" >5</text>
<text x="624.7" y="212.19" font-size="4.3" font-weight="normal" fill="#444" text-anchor="start" dominant-baseline="central" >A,2</text>
<text x="705.5" y="212.19" font-size="4.3" font-weight="normal" fill="#444" text-anchor="end" dominant-baseline="central" >A,1</text>
<path d="M617.5,210.79 L618.8,211.99 H623.6" fill="none" stroke="#222" stroke-width="1"  stroke-linejoin="miter" stroke-linecap="square"/>
<path d="M706.9,211.99 H709.8 Q712.6,211.99 712.8,214.99" fill="none" stroke="#333" stroke-width="1" stroke-linejoin="round"/>
<text x="620.6" y="209.79000000000002" font-size="2.8" font-weight="normal" fill="#888" text-anchor="middle" dominant-baseline="central" >6</text>
<text x="624.7" y="220.45" font-size="4.3" font-weight="normal" fill="#444" text-anchor="start" dominant-baseline="central" >A,2</text>
<text x="705.5" y="220.45" font-size="4.3" font-weight="normal" fill="#444" text-anchor="end" dominant-baseline="central" >A,1</text>
<path d="M617.5,219.05 L618.8,220.25 H623.6" fill="none" stroke="#222" stroke-width="1"  stroke-linejoin="miter" stroke-linecap="square"/>
<path d="M706.9,220.25 H709.8 Q712.6,220.25 712.8,223.25" fill="none" stroke="#333" stroke-width="1" stroke-linejoin="round"/>
<text x="620.6" y="218.05" font-size="2.8" font-weight="normal" fill="#888" text-anchor="middle" dominant-baseline="central" >7</text>
<rect x="640.7" y="160.1" width="48.90" height="23.10" fill="#c4c4c4" stroke="#999" stroke-width="0.5" />
<rect x="644.5" y="160.4" width="7.60" height="7.00" fill="#333" stroke="none" stroke-width="0" />
<text x="642.7" y="164.5" font-size="5.2" font-weight="normal" fill="#222" text-anchor="middle" dominant-baseline="central" >0</text>
<text x="648.6" y="164.5" font-size="5.4" font-weight="bold" fill="#eee" text-anchor="middle" dominant-baseline="central"  textLength="5.9" lengthAdjust="spacingAndGlyphs">00</text>
<text x="655.9" y="164.5" font-size="5.4" font-weight="bold" fill="#1a1a1a" text-anchor="middle" dominant-baseline="central"  textLength="5.9" lengthAdjust="spacingAndGlyphs">00</text>
<text x="663.2" y="164.5" font-size="5.4" font-weight="bold" fill="#1a1a1a" text-anchor="middle" dominant-baseline="central"  textLength="5.9" lengthAdjust="spacingAndGlyphs">00</text>
<text x="670.6" y="164.5" font-size="5.4" font-weight="bold" fill="#1a1a1a" text-anchor="middle" dominant-baseline="central"  textLength="5.9" lengthAdjust="spacingAndGlyphs">00</text>
<text x="678.1" y="164.5" font-size="5.4" font-weight="bold" fill="#1a1a1a" text-anchor="middle" dominant-baseline="central"  textLength="5.9" lengthAdjust="spacingAndGlyphs">00</text>
<text x="685.6" y="164.5" font-size="5.4" font-weight="bold" fill="#1a1a1a" text-anchor="middle" dominant-baseline="central"  textLength="5.9" lengthAdjust="spacingAndGlyphs">00</text>
<text x="642.7" y="172.4" font-size="5.2" font-weight="normal" fill="#222" text-anchor="middle" dominant-baseline="central" >8</text>
<text x="648.6" y="172.4" font-size="5.4" font-weight="bold" fill="#1a1a1a" text-anchor="middle" dominant-baseline="central"  textLength="5.9" lengthAdjust="spacingAndGlyphs">00</text>
<text x="655.9" y="172.4" font-size="5.4" font-weight="bold" fill="#1a1a1a" text-anchor="middle" dominant-baseline="central"  textLength="5.9" lengthAdjust="spacingAndGlyphs">00</text>
<text x="663.2" y="172.4" font-size="5.4" font-weight="bold" fill="#1a1a1a" text-anchor="middle" dominant-baseline="central"  textLength="5.9" lengthAdjust="spacingAndGlyphs">00</text>
<text x="670.6" y="172.4" font-size="5.4" font-weight="bold" fill="#1a1a1a" text-anchor="middle" dominant-baseline="central"  textLength="5.9" lengthAdjust="spacingAndGlyphs">00</text>
<text x="678.1" y="172.4" font-size="5.4" font-weight="bold" fill="#1a1a1a" text-anchor="middle" dominant-baseline="central"  textLength="5.9" lengthAdjust="spacingAndGlyphs">00</text>
<text x="685.6" y="172.4" font-size="5.4" font-weight="bold" fill="#1a1a1a" text-anchor="middle" dominant-baseline="central"  textLength="5.9" lengthAdjust="spacingAndGlyphs">00</text>
<text x="642.7" y="180.3" font-size="5.2" font-weight="normal" fill="#222" text-anchor="middle" dominant-baseline="central" >c</text>
<text x="648.6" y="180.3" font-size="5.4" font-weight="bold" fill="#1a1a1a" text-anchor="middle" dominant-baseline="central"  textLength="5.9" lengthAdjust="spacingAndGlyphs">00</text>
<text x="655.9" y="180.3" font-size="5.4" font-weight="bold" fill="#1a1a1a" text-anchor="middle" dominant-baseline="central"  textLength="5.9" lengthAdjust="spacingAndGlyphs">00</text>
<text x="663.2" y="180.3" font-size="5.4" font-weight="bold" fill="#1a1a1a" text-anchor="middle" dominant-baseline="central"  textLength="5.9" lengthAdjust="spacingAndGlyphs">00</text>
<text x="670.6" y="180.3" font-size="5.4" font-weight="bold" fill="#1a1a1a" text-anchor="middle" dominant-baseline="central"  textLength="5.9" lengthAdjust="spacingAndGlyphs">00</text>
<path d="M611.1,153.5 V112.4 H727.4 V155.5" fill="none" stroke="#107010" stroke-width="1.5"  stroke-linejoin="miter" stroke-linecap="square"/>
<circle cx="611.1" cy="153.5" r="1.9" fill="#107010"/>
<polygon points="599.3,141.5 604.98,141.5 606.6,143.768 606.6,147.33200000000002 604.98,149.6 599.3,149.6" fill="#fff" stroke="#333" stroke-width="1.1" stroke-linejoin="round"/>
<text x="602.5450000000001" y="145.85000000000002" font-size="5" font-weight="bold" fill="#111" text-anchor="middle" dominant-baseline="central" >RI</text>
<polygon points="597.4,150.1 605.12,150.1 606.6,152.172 606.6,155.42800000000003 605.12,157.5 597.4,157.5" fill="#fff" stroke="#333" stroke-width="1.1" stroke-linejoin="round"/>
<text x="601.63" y="154.10000000000002" font-size="5" font-weight="bold" fill="#111" text-anchor="middle" dominant-baseline="central" >RO</text>
<path d="M606.6,145.4 H615.7" fill="none" stroke="#107010" stroke-width="1.5"  stroke-linejoin="miter" stroke-linecap="square"/>
<path d="M615.7,145.4 H623.4" fill="none" stroke="#333" stroke-width="1"  stroke-linejoin="miter" stroke-linecap="square"/>
<path d="M606.6,153.5 H615.7 V149.8" fill="none" stroke="#107010" stroke-width="1.5"  stroke-linejoin="miter" stroke-linecap="square"/>
<path d="M615.7,149.8 H623.4" fill="none" stroke="#333" stroke-width="1"  stroke-linejoin="miter" stroke-linecap="square"/>
<path d="M750.9,124.30 H774.3" fill="none" stroke="#3636f5" stroke-width="1.8"  stroke-linejoin="miter" stroke-linecap="square"/>
<path d="M750.9,128.43 H774.3" fill="none" stroke="#3636f5" stroke-width="1.8"  stroke-linejoin="miter" stroke-linecap="square"/>
<path d="M750.9,132.56 H774.3" fill="none" stroke="#3636f5" stroke-width="1.8"  stroke-linejoin="miter" stroke-linecap="square"/>
<path d="M750.9,136.69 H774.3" fill="none" stroke="#3636f5" stroke-width="1.8"  stroke-linejoin="miter" stroke-linecap="square"/>
<path d="M750.9,140.82 H757.3" fill="none" stroke="#3636f5" stroke-width="1.8"  stroke-linejoin="miter" stroke-linecap="square"/>
<path d="M750.9,144.95 H757.3" fill="none" stroke="#3636f5" stroke-width="1.8"  stroke-linejoin="miter" stroke-linecap="square"/>
<path d="M750.9,149.08 H757.3" fill="none" stroke="#3636f5" stroke-width="1.8"  stroke-linejoin="miter" stroke-linecap="square"/>
<path d="M750.9,153.21 H757.3" fill="none" stroke="#3636f5" stroke-width="1.8"  stroke-linejoin="miter" stroke-linecap="square"/>
<path d="M769,140.82 H774.3" fill="none" stroke="#107010" stroke-width="1.5"  stroke-linejoin="miter" stroke-linecap="square"/>
<circle cx="769" cy="140.82" r="1.6" fill="#107010"/>
<path d="M769,144.95 H774.3" fill="none" stroke="#107010" stroke-width="1.5"  stroke-linejoin="miter" stroke-linecap="square"/>
<circle cx="769" cy="144.95" r="1.6" fill="#107010"/>
<path d="M769,149.08 H774.3" fill="none" stroke="#107010" stroke-width="1.5"  stroke-linejoin="miter" stroke-linecap="square"/>
<circle cx="769" cy="149.07999999999998" r="1.6" fill="#107010"/>
<path d="M769,153.21 H774.3" fill="none" stroke="#107010" stroke-width="1.5"  stroke-linejoin="miter" stroke-linecap="square"/>
<circle cx="769" cy="153.21" r="1.6" fill="#107010"/>
<path d="M769,141.3 V162.4 H764" fill="none" stroke="#107010" stroke-width="1.5"  stroke-linejoin="miter" stroke-linecap="square"/>
<text x="762.3" y="162.6" font-size="5.5" font-weight="bold" fill="#107010" text-anchor="middle" dominant-baseline="central" >0</text>
<path d="M750.9,124.3 V156.6" fill="none" stroke="#000" stroke-width="2.2"  stroke-linejoin="miter" stroke-linecap="square"/>
<path d="M774.3,122.2 V153.6" fill="none" stroke="#000" stroke-width="2.2"  stroke-linejoin="miter" stroke-linecap="square"/>
<rect x="399.6" y="245.1" width="83.00" height="54.10" fill="#d951a3" stroke="#555" stroke-width="0.8" />
<text x="440.2" y="256.6" font-size="13" font-weight="bold" fill="#fff" text-anchor="middle" dominant-baseline="central" >PC</text>
<text x="402" y="249.4" font-size="5" font-weight="normal" fill="#222" text-anchor="start" dominant-baseline="central" >CLK</text>
<text x="402" y="256.8" font-size="5" font-weight="normal" fill="#222" text-anchor="start" dominant-baseline="central" >CO</text>
<text x="402" y="269.5" font-size="5" font-weight="normal" fill="#222" text-anchor="start" dominant-baseline="central" >jump_Address</text>
<text x="402" y="282" font-size="5" font-weight="normal" fill="#222" text-anchor="start" dominant-baseline="central" >Jump</text>
<text x="402" y="294.3" font-size="5" font-weight="normal" fill="#222" text-anchor="start" dominant-baseline="central" >CE</text>
<polygon points="374.2,235.7 388.8,235.7 390.8,238.61199999999997 390.8,243.188 388.8,246.1 374.2,246.1" fill="#fff" stroke="#333" stroke-width="1.1" stroke-linejoin="round"/>
<text x="382.0" y="241.2" font-size="7.2" font-weight="bold" fill="#111" text-anchor="middle" dominant-baseline="central" >CLK</text>
<path d="M390.8,240.8 H395 V249.4 H399.6" fill="none" stroke="#e0304a" stroke-width="1.4"  stroke-linejoin="miter" stroke-linecap="square"/>
<polygon points="388.9,257.5 385.29999999999995,253.9 374.2,253.9 374.2,261.1 385.29999999999995,261.1" fill="#fff" stroke="#222" stroke-width="1"/>
<text x="380.7" y="257.8" font-size="6.6" font-weight="bold" fill="#107010" text-anchor="middle" dominant-baseline="central" stroke="#107010" stroke-width="0.35">0</text>
<circle cx="383.4" cy="259.7" r="0.9" fill="#6a8ff0"/>
<path d="M388.9,257.5 H399.6" fill="none" stroke="#107010" stroke-width="1.5"  stroke-linejoin="miter" stroke-linecap="square"/>
<text x="373.2" y="258.0" font-size="8" font-weight="bold" fill="#0000ff" text-anchor="end" dominant-baseline="central"  textLength="9.4" lengthAdjust="spacingAndGlyphs">CO</text>
<polygon points="388.9,282.6 385.29999999999995,278.7 374.2,278.7 374.2,286.5 385.29999999999995,286.5" fill="#fff" stroke="#222" stroke-width="1"/>
<text x="380.7" y="282.90000000000003" font-size="6.6" font-weight="bold" fill="#107010" text-anchor="middle" dominant-baseline="central" stroke="#107010" stroke-width="0.35">0</text>
<circle cx="383.4" cy="284.8" r="0.9" fill="#6a8ff0"/>
<path d="M388.9,282.6 H399.6" fill="none" stroke="#107010" stroke-width="1.5"  stroke-linejoin="miter" stroke-linecap="square"/>
<text x="373.2" y="283.1" font-size="8" font-weight="bold" fill="#0000ff" text-anchor="end" dominant-baseline="central"  textLength="18.5" lengthAdjust="spacingAndGlyphs">Jump</text>
<polygon points="388.9,295.1 385.29999999999995,291.4 374.2,291.4 374.2,298.8 385.29999999999995,298.8" fill="#fff" stroke="#222" stroke-width="1"/>
<text x="380.7" y="295.40000000000003" font-size="6.6" font-weight="bold" fill="#107010" text-anchor="middle" dominant-baseline="central" stroke="#107010" stroke-width="0.35">0</text>
<circle cx="383.4" cy="297.3" r="0.9" fill="#6a8ff0"/>
<path d="M388.9,295.1 H399.6" fill="none" stroke="#107010" stroke-width="1.5"  stroke-linejoin="miter" stroke-linecap="square"/>
<text x="373.2" y="295.6" font-size="8" font-weight="bold" fill="#0000ff" text-anchor="end" dominant-baseline="central"  textLength="8.7" lengthAdjust="spacingAndGlyphs">CE</text>
<polygon points="467.3,328.25 463.7,324.6 424.1,324.6 424.1,331.9 463.7,331.9" fill="#fff" stroke="#222" stroke-width="1"/>
<text x="430.8" y="328.55" font-size="6.6" font-weight="bold" fill="#107010" text-anchor="middle" dominant-baseline="central" stroke="#107010" stroke-width="0.35">0</text>
<text x="434.93" y="328.55" font-size="6.6" font-weight="bold" fill="#107010" text-anchor="middle" dominant-baseline="central" stroke="#107010" stroke-width="0.35">0</text>
<text x="439.06" y="328.55" font-size="6.6" font-weight="bold" fill="#107010" text-anchor="middle" dominant-baseline="central" stroke="#107010" stroke-width="0.35">0</text>
<text x="443.19" y="328.55" font-size="6.6" font-weight="bold" fill="#107010" text-anchor="middle" dominant-baseline="central" stroke="#107010" stroke-width="0.35">0</text>
<text x="447.32" y="328.55" font-size="6.6" font-weight="bold" fill="#107010" text-anchor="middle" dominant-baseline="central" stroke="#107010" stroke-width="0.35">0</text>
<text x="451.45" y="328.55" font-size="6.6" font-weight="bold" fill="#107010" text-anchor="middle" dominant-baseline="central" stroke="#107010" stroke-width="0.35">0</text>
<text x="455.58000000000004" y="328.55" font-size="6.6" font-weight="bold" fill="#107010" text-anchor="middle" dominant-baseline="central" stroke="#107010" stroke-width="0.35">0</text>
<text x="459.71000000000004" y="328.55" font-size="6.6" font-weight="bold" fill="#107010" text-anchor="middle" dominant-baseline="central" stroke="#107010" stroke-width="0.35">0</text>
<circle cx="462.31000000000006" cy="330.45" r="0.9" fill="#6a8ff0"/>
<polygon points="467.3,340.75 463.7,337 453.2,337 453.2,344.5 463.7,344.5" fill="#fff" stroke="#222" stroke-width="1"/>
<text x="459.7" y="341.05" font-size="6.6" font-weight="bold" fill="#107010" text-anchor="middle" dominant-baseline="central" stroke="#107010" stroke-width="0.35">0</text>
<circle cx="462.4" cy="342.95" r="0.9" fill="#6a8ff0"/>
<path d="M467.3,340.7 H498.7 V330.6" fill="none" stroke="#107010" stroke-width="1.5"  stroke-linejoin="miter" stroke-linecap="square"/>
<text x="452.3" y="341.8" font-size="7.8" font-weight="bold" fill="#0000ff" text-anchor="end" dominant-baseline="central"  textLength="22.4" lengthAdjust="spacingAndGlyphs">BUS_IN</text>
<polygon points="468.1,357.3 464.5,353.40000000000003 453.1,353.40000000000003 453.1,361.2 464.5,361.2" fill="#fff" stroke="#222" stroke-width="1"/>
<text x="459.6" y="357.6" font-size="6.6" font-weight="bold" fill="#107010" text-anchor="middle" dominant-baseline="central" stroke="#107010" stroke-width="0.35">0</text>
<circle cx="462.3" cy="359.5" r="0.9" fill="#6a8ff0"/>
<path d="M468.1,357.30 H536.1" fill="none" stroke="#107010" stroke-width="1.5"  stroke-linejoin="miter" stroke-linecap="square"/>
<polygon points="538.1,351.7 548.3000000000001,351.7 548.3000000000001,362.90000000000003 538.1,362.90000000000003 536.1,359.764 536.1,354.836" fill="#fff" stroke="#333" stroke-width="1.1" stroke-linejoin="round"/>
<text x="542.7" y="357.6" font-size="7.6" font-weight="bold" fill="#111" text-anchor="middle" dominant-baseline="central" >MI</text>
<text x="452.2" y="357.8" font-size="8" font-weight="bold" fill="#0000ff" text-anchor="end" dominant-baseline="central"  textLength="8.2" lengthAdjust="spacingAndGlyphs">MI</text>
<polygon points="468.1,369.745 464.5,365.845 453.1,365.845 453.1,373.645 464.5,373.645" fill="#fff" stroke="#222" stroke-width="1"/>
<text x="459.6" y="370.045" font-size="6.6" font-weight="bold" fill="#107010" text-anchor="middle" dominant-baseline="central" stroke="#107010" stroke-width="0.35">0</text>
<circle cx="462.3" cy="371.945" r="0.9" fill="#6a8ff0"/>
<path d="M468.1,369.75 H536.1" fill="none" stroke="#107010" stroke-width="1.5"  stroke-linejoin="miter" stroke-linecap="square"/>
<polygon points="538.1,364.145 546.4,364.145 546.4,375.345 538.1,375.345 536.1,372.209 536.1,367.281" fill="#fff" stroke="#333" stroke-width="1.1" stroke-linejoin="round"/>
<text x="541.75" y="370.045" font-size="7.6" font-weight="bold" fill="#111" text-anchor="middle" dominant-baseline="central" >RI</text>
<text x="452.2" y="370.245" font-size="8" font-weight="bold" fill="#0000ff" text-anchor="end" dominant-baseline="central"  textLength="6.4" lengthAdjust="spacingAndGlyphs">RI</text>
<polygon points="468.1,382.19 464.5,378.29 453.1,378.29 453.1,386.09 464.5,386.09" fill="#fff" stroke="#222" stroke-width="1"/>
<text x="459.6" y="382.49" font-size="6.6" font-weight="bold" fill="#107010" text-anchor="middle" dominant-baseline="central" stroke="#107010" stroke-width="0.35">0</text>
<circle cx="462.3" cy="384.39" r="0.9" fill="#6a8ff0"/>
<path d="M468.1,382.19 H536.1" fill="none" stroke="#107010" stroke-width="1.5"  stroke-linejoin="miter" stroke-linecap="square"/>
<polygon points="538.1,376.59 549.5,376.59 549.5,387.79 538.1,387.79 536.1,384.654 536.1,379.726" fill="#fff" stroke="#333" stroke-width="1.1" stroke-linejoin="round"/>
<text x="543.3" y="382.49" font-size="7.6" font-weight="bold" fill="#111" text-anchor="middle" dominant-baseline="central" >RO</text>
<text x="452.2" y="382.69" font-size="8" font-weight="bold" fill="#0000ff" text-anchor="end" dominant-baseline="central"  textLength="9.4" lengthAdjust="spacingAndGlyphs">RO</text>
<polygon points="468.1,394.635 464.5,390.735 453.1,390.735 453.1,398.53499999999997 464.5,398.53499999999997" fill="#fff" stroke="#222" stroke-width="1"/>
<text x="459.6" y="394.935" font-size="6.6" font-weight="bold" fill="#107010" text-anchor="middle" dominant-baseline="central" stroke="#107010" stroke-width="0.35">0</text>
<circle cx="462.3" cy="396.835" r="0.9" fill="#6a8ff0"/>
<path d="M468.1,394.63 H536.1" fill="none" stroke="#107010" stroke-width="1.5"  stroke-linejoin="miter" stroke-linecap="square"/>
<polygon points="538.1,389.03499999999997 543.5,389.03499999999997 543.5,400.235 538.1,400.235 536.1,397.099 536.1,392.171" fill="#fff" stroke="#333" stroke-width="1.1" stroke-linejoin="round"/>
<text x="540.3" y="394.935" font-size="7.6" font-weight="bold" fill="#111" text-anchor="middle" dominant-baseline="central" >II</text>
<text x="452.2" y="395.135" font-size="8" font-weight="bold" fill="#0000ff" text-anchor="end" dominant-baseline="central"  textLength="3.5" lengthAdjust="spacingAndGlyphs">II</text>
<polygon points="468.1,407.08000000000004 464.5,403.18000000000006 453.1,403.18000000000006 453.1,410.98 464.5,410.98" fill="#fff" stroke="#222" stroke-width="1"/>
<text x="459.6" y="407.38000000000005" font-size="6.6" font-weight="bold" fill="#107010" text-anchor="middle" dominant-baseline="central" stroke="#107010" stroke-width="0.35">0</text>
<circle cx="462.3" cy="409.28000000000003" r="0.9" fill="#6a8ff0"/>
<path d="M468.1,407.08 H536.1" fill="none" stroke="#107010" stroke-width="1.5"  stroke-linejoin="miter" stroke-linecap="square"/>
<polygon points="538.1,401.48 546.9,401.48 546.9,412.68000000000006 538.1,412.68000000000006 536.1,409.54400000000004 536.1,404.61600000000004" fill="#fff" stroke="#333" stroke-width="1.1" stroke-linejoin="round"/>
<text x="542.0" y="407.38000000000005" font-size="7.6" font-weight="bold" fill="#111" text-anchor="middle" dominant-baseline="central" >IO</text>
<text x="452.2" y="407.58000000000004" font-size="8" font-weight="bold" fill="#0000ff" text-anchor="end" dominant-baseline="central"  textLength="7" lengthAdjust="spacingAndGlyphs">IO</text>
<polygon points="468.1,419.52500000000003 464.5,415.62500000000006 453.1,415.62500000000006 453.1,423.425 464.5,423.425" fill="#fff" stroke="#222" stroke-width="1"/>
<text x="459.6" y="419.82500000000005" font-size="6.6" font-weight="bold" fill="#107010" text-anchor="middle" dominant-baseline="central" stroke="#107010" stroke-width="0.35">0</text>
<circle cx="462.3" cy="421.725" r="0.9" fill="#6a8ff0"/>
<path d="M468.1,419.53 H536.1" fill="none" stroke="#107010" stroke-width="1.5"  stroke-linejoin="miter" stroke-linecap="square"/>
<polygon points="538.1,413.925 546.4,413.925 546.4,425.12500000000006 538.1,425.12500000000006 536.1,421.98900000000003 536.1,417.06100000000004" fill="#fff" stroke="#333" stroke-width="1.1" stroke-linejoin="round"/>
<text x="541.75" y="419.82500000000005" font-size="7.6" font-weight="bold" fill="#111" text-anchor="middle" dominant-baseline="central" >AI</text>
<text x="452.2" y="420.02500000000003" font-size="8" font-weight="bold" fill="#0000ff" text-anchor="end" dominant-baseline="central"  textLength="6.7" lengthAdjust="spacingAndGlyphs">AI</text>
<polygon points="468.1,431.97 464.5,428.07000000000005 453.1,428.07000000000005 453.1,435.87 464.5,435.87" fill="#fff" stroke="#222" stroke-width="1"/>
<text x="459.6" y="432.27000000000004" font-size="6.6" font-weight="bold" fill="#107010" text-anchor="middle" dominant-baseline="central" stroke="#107010" stroke-width="0.35">0</text>
<circle cx="462.3" cy="434.17" r="0.9" fill="#6a8ff0"/>
<path d="M468.1,431.97 H536.1" fill="none" stroke="#107010" stroke-width="1.5"  stroke-linejoin="miter" stroke-linecap="square"/>
<polygon points="538.1,426.37 549.5,426.37 549.5,437.57000000000005 538.1,437.57000000000005 536.1,434.434 536.1,429.50600000000003" fill="#fff" stroke="#333" stroke-width="1.1" stroke-linejoin="round"/>
<text x="543.3" y="432.27000000000004" font-size="7.6" font-weight="bold" fill="#111" text-anchor="middle" dominant-baseline="central" >AO</text>
<text x="452.2" y="432.47" font-size="8" font-weight="bold" fill="#0000ff" text-anchor="end" dominant-baseline="central"  textLength="9.7" lengthAdjust="spacingAndGlyphs">AO</text>
<polygon points="468.1,444.415 464.5,440.51500000000004 453.1,440.51500000000004 453.1,448.315 464.5,448.315" fill="#fff" stroke="#222" stroke-width="1"/>
<text x="459.6" y="444.71500000000003" font-size="6.6" font-weight="bold" fill="#107010" text-anchor="middle" dominant-baseline="central" stroke="#107010" stroke-width="0.35">0</text>
<circle cx="462.3" cy="446.615" r="0.9" fill="#6a8ff0"/>
<path d="M468.1,444.42 H536.1" fill="none" stroke="#107010" stroke-width="1.5"  stroke-linejoin="miter" stroke-linecap="square"/>
<polygon points="538.1,438.815 545.3000000000001,438.815 545.3000000000001,450.01500000000004 538.1,450.01500000000004 536.1,446.879 536.1,441.951" fill="#fff" stroke="#333" stroke-width="1.1" stroke-linejoin="round"/>
<text x="541.2" y="444.71500000000003" font-size="7.6" font-weight="bold" fill="#111" text-anchor="middle" dominant-baseline="central" >BI</text>
<text x="452.2" y="444.915" font-size="8" font-weight="bold" fill="#0000ff" text-anchor="end" dominant-baseline="central"  textLength="6.2" lengthAdjust="spacingAndGlyphs">BI</text>
<polygon points="468.1,456.86 464.5,452.96000000000004 453.1,452.96000000000004 453.1,460.76 464.5,460.76" fill="#fff" stroke="#222" stroke-width="1"/>
<text x="459.6" y="457.16" font-size="6.6" font-weight="bold" fill="#107010" text-anchor="middle" dominant-baseline="central" stroke="#107010" stroke-width="0.35">0</text>
<circle cx="462.3" cy="459.06" r="0.9" fill="#6a8ff0"/>
<path d="M468.1,456.86 H536.1" fill="none" stroke="#107010" stroke-width="1.5"  stroke-linejoin="miter" stroke-linecap="square"/>
<polygon points="538.1,451.26 548.6,451.26 548.6,462.46000000000004 538.1,462.46000000000004 536.1,459.324 536.1,454.396" fill="#fff" stroke="#333" stroke-width="1.1" stroke-linejoin="round"/>
<text x="542.85" y="457.16" font-size="7.6" font-weight="bold" fill="#111" text-anchor="middle" dominant-baseline="central" >BO</text>
<text x="452.2" y="457.36" font-size="8" font-weight="bold" fill="#0000ff" text-anchor="end" dominant-baseline="central"  textLength="8.9" lengthAdjust="spacingAndGlyphs">BO</text>
<polygon points="468.1,469.305 464.5,465.40500000000003 453.1,465.40500000000003 453.1,473.205 464.5,473.205" fill="#fff" stroke="#222" stroke-width="1"/>
<text x="459.6" y="469.605" font-size="6.6" font-weight="bold" fill="#107010" text-anchor="middle" dominant-baseline="central" stroke="#107010" stroke-width="0.35">0</text>
<circle cx="462.3" cy="471.505" r="0.9" fill="#6a8ff0"/>
<path d="M468.1,469.31 H536.1" fill="none" stroke="#107010" stroke-width="1.5"  stroke-linejoin="miter" stroke-linecap="square"/>
<polygon points="538.1,463.705 548.6,463.705 548.6,474.90500000000003 538.1,474.90500000000003 536.1,471.769 536.1,466.841" fill="#fff" stroke="#333" stroke-width="1.1" stroke-linejoin="round"/>
<text x="542.85" y="469.605" font-size="7.6" font-weight="bold" fill="#111" text-anchor="middle" dominant-baseline="central" >EO</text>
<text x="452.2" y="469.805" font-size="8" font-weight="bold" fill="#0000ff" text-anchor="end" dominant-baseline="central"  textLength="8.9" lengthAdjust="spacingAndGlyphs">EO</text>
<polygon points="468.1,481.75 464.5,477.85 453.1,477.85 453.1,485.65 464.5,485.65" fill="#fff" stroke="#222" stroke-width="1"/>
<text x="459.6" y="482.05" font-size="6.6" font-weight="bold" fill="#107010" text-anchor="middle" dominant-baseline="central" stroke="#107010" stroke-width="0.35">0</text>
<circle cx="462.3" cy="483.95" r="0.9" fill="#6a8ff0"/>
<path d="M468.1,481.75 H536.1" fill="none" stroke="#107010" stroke-width="1.5"  stroke-linejoin="miter" stroke-linecap="square"/>
<polygon points="538.1,476.15 548.1,476.15 548.1,487.35 538.1,487.35 536.1,484.214 536.1,479.286" fill="#fff" stroke="#333" stroke-width="1.1" stroke-linejoin="round"/>
<text x="542.6" y="482.05" font-size="7.6" font-weight="bold" fill="#111" text-anchor="middle" dominant-baseline="central" >SU</text>
<text x="452.2" y="482.25" font-size="8" font-weight="bold" fill="#0000ff" text-anchor="end" dominant-baseline="central"  textLength="8.25" lengthAdjust="spacingAndGlyphs">SU</text>
<rect x="399.3" y="519.3" width="87.20" height="62.00" fill="#8ac9ae" stroke="#666" stroke-width="0.8" />
<text x="443.2" y="550" font-size="12.5" font-weight="bold" fill="#fff" text-anchor="middle" dominant-baseline="central" >ALU</text>
<text x="400.7" y="526.2" font-size="5" font-weight="normal" fill="#222" text-anchor="start" dominant-baseline="central" >CLK</text>
<text x="428.4" y="526.2" font-size="5" font-weight="normal" fill="#222" text-anchor="middle" dominant-baseline="central" >SU</text>
<text x="457.6" y="526.2" font-size="5" font-weight="normal" fill="#222" text-anchor="middle" dominant-baseline="central" >EO</text>
<text x="482.3" y="526.2" font-size="5" font-weight="normal" fill="#222" text-anchor="middle" dominant-baseline="central" >FI</text>
<text x="402" y="547.6" font-size="5" font-weight="normal" fill="#222" text-anchor="start" dominant-baseline="central" >IN_A</text>
<text x="484.5" y="547.6" font-size="5" font-weight="normal" fill="#222" text-anchor="end" dominant-baseline="central" >IN_B</text>
<text x="419.7" y="575.2" font-size="5" font-weight="normal" fill="#222" text-anchor="middle" dominant-baseline="central" >SUM</text>
<text x="448.4" y="575.2" font-size="5" font-weight="normal" fill="#222" text-anchor="middle" dominant-baseline="central" >ZF</text>
<text x="473.8" y="575.2" font-size="5" font-weight="normal" fill="#222" text-anchor="middle" dominant-baseline="central" >CF</text>
<polygon points="396,507.4 412,507.4 412,517.0999999999999 406.4,519.3 401.6,519.3 396,517.0999999999999" fill="#fff" stroke="#333" stroke-width="1.1" stroke-linejoin="miter"/>
<text x="404.0" y="513.0499999999998" font-size="7.4" font-weight="bold" fill="#111" text-anchor="middle" dominant-baseline="central"  textLength="12.2" lengthAdjust="spacingAndGlyphs">CLK</text>
<polygon points="422.3,507.4 434.5,507.4 434.5,517.0999999999999 430.22999999999996,519.3 426.57,519.3 422.3,517.0999999999999" fill="#fff" stroke="#333" stroke-width="1.1" stroke-linejoin="miter"/>
<text x="428.4" y="513.0499999999998" font-size="7.4" font-weight="bold" fill="#111" text-anchor="middle" dominant-baseline="central"  textLength="8.8" lengthAdjust="spacingAndGlyphs">SU</text>
<polygon points="451.2,507.4 464.3,507.4 464.3,517.0999999999999 459.71500000000003,519.3 455.78499999999997,519.3 451.2,517.0999999999999" fill="#fff" stroke="#333" stroke-width="1.1" stroke-linejoin="miter"/>
<text x="457.75" y="513.0499999999998" font-size="7.4" font-weight="bold" fill="#111" text-anchor="middle" dominant-baseline="central"  textLength="9.5" lengthAdjust="spacingAndGlyphs">EO</text>
<polygon points="478.1,507.4 486.5,507.4 486.5,517.0999999999999 483.56,519.3 481.04,519.3 478.1,517.0999999999999" fill="#fff" stroke="#333" stroke-width="1.1" stroke-linejoin="miter"/>
<text x="482.3" y="513.0499999999998" font-size="7.4" font-weight="bold" fill="#111" text-anchor="middle" dominant-baseline="central"  textLength="5.5" lengthAdjust="spacingAndGlyphs">FI</text>
<polygon points="444.3,593.6 454.7,593.6 454.7,582.5 451.06,580.3 447.94,580.3 444.3,582.5" fill="#fff" stroke="#333" stroke-width="1.1" stroke-linejoin="miter"/>
<text x="449.5" y="587.85" font-size="7.6" font-weight="bold" fill="#111" text-anchor="middle" dominant-baseline="central"  textLength="7.9" lengthAdjust="spacingAndGlyphs">ZF</text>
<polygon points="468.6,593.6 479.3,593.6 479.3,582.5 475.55500000000006,580.3 472.345,580.3 468.6,582.5" fill="#fff" stroke="#333" stroke-width="1.1" stroke-linejoin="miter"/>
<text x="473.95000000000005" y="587.85" font-size="7.6" font-weight="bold" fill="#111" text-anchor="middle" dominant-baseline="central"  textLength="8.3" lengthAdjust="spacingAndGlyphs">CF</text>
<rect x="337.5" y="537.9" width="7.20" height="5.20" fill="#cfcfcf" stroke="none" stroke-width="0" />
<text x="341.1" y="540.7" font-size="5" font-weight="normal" fill="#555" text-anchor="middle" dominant-baseline="central" >00</text>
<text x="341.2" y="531.4" font-size="7.4" font-weight="bold" fill="#0000ff" text-anchor="middle" dominant-baseline="central"  textLength="35.6" lengthAdjust="spacingAndGlyphs">Register_A</text>
<polygon points="320.8,552.3 327.14,552.3 328.8,554.624 328.8,558.2760000000001 327.14,560.6 320.8,560.6" fill="#fff" stroke="#333" stroke-width="1.1" stroke-linejoin="round"/>
<text x="324.385" y="556.75" font-size="5" font-weight="bold" fill="#111" text-anchor="middle" dominant-baseline="central" >AI</text>
<path d="M328.8,556.4 H333" fill="none" stroke="#107010" stroke-width="1.5"  stroke-linejoin="miter" stroke-linecap="square"/>
<polygon points="316.5,561.3 327.14,561.3 328.8,563.624 328.8,567.2760000000001 327.14,569.6 316.5,569.6" fill="#fff" stroke="#333" stroke-width="1.1" stroke-linejoin="round"/>
<text x="322.23499999999996" y="565.75" font-size="5" font-weight="bold" fill="#111" text-anchor="middle" dominant-baseline="central" >CLK</text>
<path d="M328.8,565.4 H333" fill="none" stroke="#e0304a" stroke-width="1.5"  stroke-linejoin="miter" stroke-linecap="square"/>
<polygon points="356.4,563.6 367.6,563.6 369.6,566.6519999999999 369.6,571.448 367.6,574.5 356.4,574.5" fill="#fff" stroke="#333" stroke-width="1.1" stroke-linejoin="round"/>
<text x="362.5" y="569.3499999999999" font-size="7.6" font-weight="bold" fill="#111" text-anchor="middle" dominant-baseline="central" >AO</text>
<path d="M369.6,569 H374 V563.2" fill="none" stroke="#107010" stroke-width="1.4"  stroke-linejoin="miter" stroke-linecap="square"/>
<rect x="520.5" y="545.6999999999999" width="7.20" height="5.20" fill="#cfcfcf" stroke="none" stroke-width="0" />
<text x="524.1" y="548.5" font-size="5" font-weight="normal" fill="#555" text-anchor="middle" dominant-baseline="central" >00</text>
<text x="524.2" y="539.8" font-size="7.4" font-weight="bold" fill="#0000ff" text-anchor="middle" dominant-baseline="central"  textLength="34.7" lengthAdjust="spacingAndGlyphs">Register_B</text>
<polygon points="502.9,561.3 509.5,561.3 511.1,563.54 511.1,567.06 509.5,569.3 502.9,569.3" fill="#fff" stroke="#333" stroke-width="1.1" stroke-linejoin="round"/>
<text x="506.6" y="565.5999999999999" font-size="5" font-weight="bold" fill="#111" text-anchor="middle" dominant-baseline="central" >BI</text>
<path d="M511.1,565.3 H515.4" fill="none" stroke="#107010" stroke-width="1.5"  stroke-linejoin="miter" stroke-linecap="square"/>
<polygon points="499.5,569.6 509.54,569.6 511.1,571.784 511.1,575.216 509.54,577.4 499.5,577.4" fill="#fff" stroke="#333" stroke-width="1.1" stroke-linejoin="round"/>
<text x="504.91" y="573.8" font-size="5" font-weight="bold" fill="#111" text-anchor="middle" dominant-baseline="central" >CLK</text>
<path d="M511.1,573.5 H515.4" fill="none" stroke="#e0304a" stroke-width="1.5"  stroke-linejoin="miter" stroke-linecap="square"/>
<polygon points="539.7,572.2 550.8,572.2 552.8,575.1120000000001 552.8,579.6880000000001 550.8,582.6 539.7,582.6" fill="#fff" stroke="#333" stroke-width="1.1" stroke-linejoin="round"/>
<text x="545.75" y="577.7" font-size="7.6" font-weight="bold" fill="#111" text-anchor="middle" dominant-baseline="central" >BO</text>
<path d="M552.8,577.4 H557 V571.4" fill="none" stroke="#107010" stroke-width="1.4"  stroke-linejoin="miter" stroke-linecap="square"/>
</svg><!--/SVG-->
<!--CSVG--><svg class="a" style="left:0;top:0" width="1024" height="663" viewBox="0 0 1024 663" font-family="Liberation Sans, sans-serif">
<rect x="257.3" y="37.4" width="12.8" height="12.5" fill="#e8e8e8" stroke="#111" stroke-width="1.3"/>
<path d="M261,47.5 C260,45 259.5,43.5 260.5,42.5 L262.5,43.8 V40 C262.5,39 264,39 264,40 V42.5 C265,42 266.5,42 267,43 C267.5,44 267.5,46 266.5,48 Z" fill="#aaa" stroke="#666" stroke-width="0.5"/>
<circle cx="260.2" cy="43.3" r="0.6" fill="#c04090"/><circle cx="266.5" cy="47.2" r="0.6" fill="#c04090"/>
<path d="M275.2,39.4 L275.2,48.6 L277.6,46.4 L279.4,50 L280.9,49.3 L279.2,45.8 L282.4,45.6 Z" fill="#111"/>
<path d="M290.2,47.4 H292.3 V41 H296.5" fill="none" stroke="#222" stroke-width="1.2"/>
<circle cx="290.3" cy="47.3" r="1.3" fill="#2a9a3a"/><circle cx="296.9" cy="40.8" r="1.3" fill="#1a2af0"/>
<text x="307.6" y="43.5" font-size="9.5" font-weight="bold" fill="#111" text-anchor="middle" dominant-baseline="central">A</text>
<rect x="318.1" y="37.8" width="1" height="12.8" fill="#a8a8a8"/>
<rect x="352.3" y="37.8" width="1" height="12.8" fill="#a8a8a8"/>
<rect x="446.0" y="37.8" width="1" height="12.8" fill="#a8a8a8"/>
<path d="M322.4,40.6 H327.5 L330.2,43.6 L327.5,46.6 H322.4 Z" fill="#fff" stroke="#333" stroke-width="0.8"/><path d="M330.2,43.6 H334" stroke="#2a9a3a" stroke-width="1"/>
<path d="M337.2,43.6 H340" stroke="#2a9a3a" stroke-width="1"/><path d="M340,40.6 H345.5 L348,43.6 L345.5,46.6 H340 Z" fill="#fff" stroke="#333" stroke-width="0.8"/>
<path d="M357.6,41 L365,43.8 L357.6,46.6 Z" fill="#fff" stroke="#333" stroke-width="0.8"/><circle cx="366.1" cy="43.8" r="1" fill="#fff" stroke="#333" stroke-width="0.7"/><path d="M355.5,43.8 H357.6" stroke="#333" stroke-width="0.7"/>
<path d="M372,41 H375.5 A3.3,2.8 0 0 1 375.5,46.6 H372 Z" fill="#fff" stroke="#333" stroke-width="0.9"/>
<path d="M386.8,41 H390 Q393.8,41.5 394.4,43.8 Q393.8,46.1 390,46.6 H386.8 Q388.3,43.8 386.8,41 Z" fill="#fff" stroke="#333" stroke-width="0.9"/>
<path d="M402.6,41 H405 Q408.8,41.5 409.6,43.8 Q408.8,46.1 405,46.6 H402.6 Q404.1,43.8 402.6,41 Z" fill="#fff" stroke="#333" stroke-width="0.9"/><path d="M401,41 Q402.5,43.8 401,46.6" fill="none" stroke="#333" stroke-width="0.9"/>
<path d="M416.4,41 H420 A3.3,2.8 0 0 1 420,46.6 H416.4 Z" fill="#fff" stroke="#333" stroke-width="0.9"/><circle cx="424.8" cy="43.8" r="1" fill="#fff" stroke="#333" stroke-width="0.7"/>
<path d="M430.8,41 H434 Q437.8,41.5 438.4,43.8 Q437.8,46.1 434,46.6 H430.8 Q432.3,43.8 430.8,41 Z" fill="#fff" stroke="#333" stroke-width="0.9"/><circle cx="439.8" cy="43.8" r="1" fill="#fff" stroke="#333" stroke-width="0.7"/>
<rect x="454.5" y="39.6" width="5.5" height="10.5" fill="#fff" stroke="#222" stroke-width="1"/><path d="M452.2,42 H454.5 M452.2,47.8 H454.5 M460,42 H462 M460,47.8 H461" stroke="#222" stroke-width="0.9"/><circle cx="461.6" cy="47.8" r="0.8" fill="#fff" stroke="#222" stroke-width="0.6"/>
<path d="M469.5,41.5 L471.5,39.5 H476.5 V48 L474.5,50 H469.5 Z" fill="#888" stroke="#222" stroke-width="0.9"/><rect x="469.5" y="41.5" width="5" height="8.5" fill="#fff" stroke="#222" stroke-width="0.9"/><path d="M467,48 H470 M474.5,42.5 H477.5" stroke="#222" stroke-width="1"/>
<path d="M6,58.3 V65.7 M2,62 H10" stroke="#1f7f1f" stroke-width="2.2"/>
<path d="M15,58 L16.5,61 M21.5,58 V62 M14.5,66.5 Q14,63 16.5,62.5 Q19,63 18.5,66 Q17,67 14.5,66.5 M20,62.5 V66.5 H23" fill="none" stroke="#2a8a2a" stroke-width="1.2"/>
<path d="M30.7,59.5 L34.4,63.2 H32 V65.7 H29.4 V63.2 H27 Z" fill="#1a1af0"/>
<path d="M42.5,64.9 L46,61.2 H43.8 V58.3 H41.2 V61.2 H39 Z" fill="#1a1af0"/>
<rect x="51.8" y="58.1" width="8.6" height="9" fill="#f4f4f4" stroke="#111" stroke-width="1.2"/><path d="M52.5,66.4 L59.8,58.8" stroke="#a03070" stroke-width="0.8"/>
<path d="M65,59.2 L71.8,65.2 M71.8,59.2 L65,65.2" stroke="#e02828" stroke-width="2.1"/>
<path d="M236.1,649.1 Q236.1,646.1 239.1,646.1" fill="none" stroke="#555" stroke-width="1.5"/>
<path d="M255.9,649.1 Q255.9,646.1 252.9,646.1" fill="none" stroke="#555" stroke-width="1.5"/>
<path d="M236.1,658.4 Q236.1,661.4 239.1,661.4" fill="none" stroke="#555" stroke-width="1.5"/>
<path d="M255.9,658.4 Q255.9,661.4 252.9,661.4" fill="none" stroke="#555" stroke-width="1.5"/>
<path d="M0,655 Q0.5,662.5 8,663 H0 Z" fill="#333"/>
<rect x="256.6" y="52.2" width="0.8" height="604" fill="#d0d0d0"/>
<text x="932.2" y="12.6" font-size="8.6" fill="#fff" stroke="#fff" stroke-width="0.15" textLength="3.4" lengthAdjust="spacingAndGlyphs">2</text>
<text x="946.2" y="12.6" font-size="8.6" fill="#fff" stroke="#fff" stroke-width="0.15" textLength="6.8" lengthAdjust="spacingAndGlyphs">18</text>
<text x="963.6" y="12.6" font-size="8.6" fill="#fff" stroke="#fff" stroke-width="0.15" textLength="2.1" lengthAdjust="spacingAndGlyphs">(</text>
<text x="972.9" y="12.6" font-size="8.6" fill="#fff" stroke="#fff" stroke-width="0.15" textLength="2.3" lengthAdjust="spacingAndGlyphs">)</text>
<text x="994.8" y="12.6" font-size="8.6" fill="#fff" stroke="#fff" stroke-width="0.15" textLength="20.5" lengthAdjust="spacingAndGlyphs">12:38</text>
<g fill="none" stroke="#fff" stroke-width="1"><circle cx="938.4" cy="7.9" r="1.35"/><path d="M936.7,9.8 H940.1 M938.4,9.8 V10.6 M941.4,6.3 V10.6 M940.1,8.4 H941.4 M937,11 H941.2 V12 H937.2 V13 H941.4"/><circle cx="955.8" cy="8.3" r="1.75"/><path d="M960.2,6.3 V10.6 M955.2,11 H960 V12 H955.4 V13 H960.2"/><path d="M969.3,6.4 L966.9,9.3 M969.3,6.9 L971.7,9.3 M966.5,10.4 H972.2 M969.3,10.4 V13.1"/><circle cx="981.4" cy="8.4" r="1.85"/><path d="M981.4,10.3 V11.8 M978.7,12.4 H984.1"/><path d="M987.2,6.3 H989.3 M986.1,7.4 H990.4 M985.4,11 H991.1 M988.25,11 V13.1"/><circle cx="988.25" cy="9.1" r="1.05"/></g>
<path d="M730,7.5 L734,5.8 L738,7.5 V12.5 L734,14.4 L730,12.5 Z" fill="#fff"/><path d="M734,10 L738,12 V8" fill="none" stroke="#2874ae" stroke-width="0.8"/>
<ellipse cx="756.5" cy="9.6" rx="5" ry="3.9" fill="#fff"/><path d="M753,12.5 L752,14.6 L755.5,13" fill="#fff"/>
<circle cx="777.3" cy="10" r="4.2" fill="none" stroke="#fff" stroke-width="1"/><path d="M776,8 L779.5,10 L776,12 Z" fill="#fff"/>
<circle cx="795.5" cy="8.3" r="1.6" fill="#fff"/><circle cx="801" cy="8.3" r="1.6" fill="#fff"/><path d="M795.5,9 V13.5 M801,9 V13.5" stroke="#fff" stroke-width="1.3"/><circle cx="793.5" cy="8.5" r="0.9" fill="#fff"/><circle cx="803" cy="8.5" r="0.9" fill="#fff"/>
<rect x="816.2" y="5.2" width="13.5" height="9.4" rx="2.2" fill="#fff"/><g fill="none" stroke="#2874ae" stroke-width="1.1"><path d="M821.2,6.5 H823 M820,7.7 H824.2 M825.6,6.2 V11 M825.6,8.6 H827 M820.4,11 V13.1 H826.2"/><circle cx="822.1" cy="9.3" r="1.1"/></g>
<path d="M843,8.8 Q847.3,4.8 851.6,8.8" fill="none" stroke="#fff" stroke-width="1.1"/><path d="M844.6,10.6 Q847.3,8 850,10.6" fill="none" stroke="#fff" stroke-width="1.1"/><circle cx="847.3" cy="12.6" r="1" fill="#fff"/>
<rect x="863.5" y="6.8" width="12" height="6.6" rx="1.8" fill="none" stroke="#ddd" stroke-width="0.8"/><rect x="864.5" y="7.8" width="8" height="4.6" rx="1" fill="#fff"/><rect x="876" y="8.8" width="1" height="2.6" fill="#ddd"/>
<circle cx="891.8" cy="9.3" r="2.8" fill="none" stroke="#fff" stroke-width="1.1"/><path d="M893.8,11.3 L896.4,13.9" stroke="#fff" stroke-width="1.2"/>
<rect x="910.5" y="6.2" width="8.4" height="3.4" rx="1.7" fill="#fff"/><rect x="910.5" y="10.5" width="8.4" height="3.4" rx="1.7" fill="#fff"/><circle cx="912.3" cy="7.9" r="1" fill="#2874ae"/><circle cx="917" cy="12.2" r="1" fill="#2874ae"/>
<path d="M16.3,5.2 Q17.6,4.6 17.9,3.4 Q16.6,3.6 16.1,4.8 Z M14,6.6 C15,6.4 15.6,6.9 16.2,6.9 C16.8,6.9 17.4,6.4 18.3,6.6 C18.9,6.7 19.4,7.1 19.7,7.6 C18.8,8.1 18.5,9 18.6,9.8 C18.7,10.7 19.3,11.3 19.9,11.6 C19.6,12.6 19,13.6 18.3,14.3 C17.8,14.8 17.2,14.7 16.6,14.5 C16,14.2 15.6,14.3 15,14.5 C14.4,14.8 13.9,14.7 13.4,14.1 C12.2,12.6 11.6,10.1 12.4,8.4 C12.8,7.4 13.4,6.8 14,6.6 Z" fill="#fff"/>
<circle cx="6.6" cy="625" r="2.9" fill="#ddd" stroke="#444" stroke-width="1.1"/><path d="M8.8,627.2 L10.6,629" stroke="#b03060" stroke-width="1.1"/><path d="M5.199999999999999,625 H8.0" stroke="#555" stroke-width="0.8"/>
<circle cx="247.9" cy="625" r="2.9" fill="#ddd" stroke="#444" stroke-width="1.1"/><path d="M250.1,627.2 L251.9,629" stroke="#b03060" stroke-width="1.1"/><path d="M246.5,625 H249.3" stroke="#555" stroke-width="0.8"/>
<path d="M247.9,623.6 V626.4" stroke="#555" stroke-width="0.8"/>
<rect x="1017.2" y="52.7" width="6.8" height="610.3" fill="#f6f6f6"/><rect x="1017.5" y="52.7" width="0.6" height="603" fill="#e2e2e2"/>
<rect x="1022.8" y="36" width="1.2" height="627" fill="#d4d4d4"/>
<rect x="1019.3" y="113.4" width="2.6" height="541" rx="1.3" fill="#c6c6c6"/>
<rect x="257.5" y="655.3" width="760" height="7.7" fill="#f6f6f6"/>
<rect x="259.6" y="656" width="544" height="3.2" rx="1.6" fill="#c6c6c6"/>
<clipPath id="lc"><rect x="2" y="71" width="250" height="276"/></clipPath><g clip-path="url(#lc)">
<rect x="16.3" y="61.8" width="8.4" height="10.4" rx="0.8" fill="#fff" stroke="#111" stroke-width="1.4"/>
<rect x="17.5" y="68.8" width="6" height="2" fill="#888"/>
<path d="M15.1,63.8 H16.3 M24.7,63.8 H25.9" stroke="#111" stroke-width="0.8"/>
<path d="M15.1,66.39999999999999 H16.3 M24.7,66.39999999999999 H25.9" stroke="#111" stroke-width="0.8"/>
<path d="M15.1,69.0 H16.3 M24.7,69.0 H25.9" stroke="#111" stroke-width="0.8"/>
<rect x="16.3" y="76.0" width="8.4" height="10.4" rx="0.8" fill="#fff" stroke="#111" stroke-width="1.4"/>
<rect x="17.5" y="83.0" width="6" height="2" fill="#888"/>
<path d="M15.1,78.0 H16.3 M24.7,78.0 H25.9" stroke="#111" stroke-width="0.8"/>
<path d="M15.1,80.6 H16.3 M24.7,80.6 H25.9" stroke="#111" stroke-width="0.8"/>
<path d="M15.1,83.2 H16.3 M24.7,83.2 H25.9" stroke="#111" stroke-width="0.8"/>
<rect x="16.3" y="90.3" width="8.4" height="10.4" rx="0.8" fill="#fff" stroke="#111" stroke-width="1.4"/>
<rect x="17.5" y="97.3" width="6" height="2" fill="#888"/>
<path d="M15.1,92.3 H16.3 M24.7,92.3 H25.9" stroke="#111" stroke-width="0.8"/>
<path d="M15.1,94.89999999999999 H16.3 M24.7,94.89999999999999 H25.9" stroke="#111" stroke-width="0.8"/>
<path d="M15.1,97.5 H16.3 M24.7,97.5 H25.9" stroke="#111" stroke-width="0.8"/>
<rect x="16.3" y="104.6" width="8.4" height="10.4" rx="0.8" fill="#fff" stroke="#111" stroke-width="1.4"/>
<rect x="17.5" y="111.6" width="6" height="2" fill="#888"/>
<path d="M15.1,106.6 H16.3 M24.7,106.6 H25.9" stroke="#111" stroke-width="0.8"/>
<path d="M15.1,109.19999999999999 H16.3 M24.7,109.19999999999999 H25.9" stroke="#111" stroke-width="0.8"/>
<path d="M15.1,111.8 H16.3 M24.7,111.8 H25.9" stroke="#111" stroke-width="0.8"/>
<rect x="16.3" y="118.8" width="8.4" height="10.4" rx="0.8" fill="#fff" stroke="#111" stroke-width="1.4"/>
<rect x="17.5" y="125.8" width="6" height="2" fill="#888"/>
<path d="M15.1,120.8 H16.3 M24.7,120.8 H25.9" stroke="#111" stroke-width="0.8"/>
<path d="M15.1,123.39999999999999 H16.3 M24.7,123.39999999999999 H25.9" stroke="#111" stroke-width="0.8"/>
<path d="M15.1,126.0 H16.3 M24.7,126.0 H25.9" stroke="#111" stroke-width="0.8"/>
<rect x="16.3" y="133.0" width="8.4" height="10.4" rx="0.8" fill="#fff" stroke="#111" stroke-width="1.4"/>
<rect x="17.5" y="140.0" width="6" height="2" fill="#888"/>
<path d="M15.1,135.0 H16.3 M24.7,135.0 H25.9" stroke="#111" stroke-width="0.8"/>
<path d="M15.1,137.6 H16.3 M24.7,137.6 H25.9" stroke="#111" stroke-width="0.8"/>
<path d="M15.1,140.2 H16.3 M24.7,140.2 H25.9" stroke="#111" stroke-width="0.8"/>
<rect x="16.3" y="147.20000000000002" width="8.4" height="10.4" rx="0.8" fill="#fff" stroke="#111" stroke-width="1.4"/>
<rect x="17.5" y="154.20000000000002" width="6" height="2" fill="#888"/>
<path d="M15.1,149.20000000000002 H16.3 M24.7,149.20000000000002 H25.9" stroke="#111" stroke-width="0.8"/>
<path d="M15.1,151.8 H16.3 M24.7,151.8 H25.9" stroke="#111" stroke-width="0.8"/>
<path d="M15.1,154.4 H16.3 M24.7,154.4 H25.9" stroke="#111" stroke-width="0.8"/>
<rect x="16.3" y="161.5" width="8.4" height="10.4" rx="0.8" fill="#fff" stroke="#111" stroke-width="1.4"/>
<rect x="17.5" y="168.5" width="6" height="2" fill="#888"/>
<path d="M15.1,163.5 H16.3 M24.7,163.5 H25.9" stroke="#111" stroke-width="0.8"/>
<path d="M15.1,166.1 H16.3 M24.7,166.1 H25.9" stroke="#111" stroke-width="0.8"/>
<path d="M15.1,168.7 H16.3 M24.7,168.7 H25.9" stroke="#111" stroke-width="0.8"/>
<rect x="16.3" y="175.70000000000002" width="8.4" height="10.4" rx="0.8" fill="#fff" stroke="#111" stroke-width="1.4"/>
<rect x="17.5" y="182.70000000000002" width="6" height="2" fill="#888"/>
<path d="M15.1,177.70000000000002 H16.3 M24.7,177.70000000000002 H25.9" stroke="#111" stroke-width="0.8"/>
<path d="M15.1,180.3 H16.3 M24.7,180.3 H25.9" stroke="#111" stroke-width="0.8"/>
<path d="M15.1,182.9 H16.3 M24.7,182.9 H25.9" stroke="#111" stroke-width="0.8"/>
<rect x="16.3" y="189.9" width="8.4" height="10.4" rx="0.8" fill="#3a7fd0" stroke="#111" stroke-width="1.4"/>
<circle cx="20" cy="194.29999999999998" r="2.8" fill="#4a8fe0" stroke="#333" stroke-width="0.8"/><path d="M22,196.6 L25,200.1" stroke="#d03050" stroke-width="1.3"/>
<rect x="16.3" y="204.10000000000002" width="8.4" height="10.4" rx="0.8" fill="#fff" stroke="#111" stroke-width="1.4"/>
<rect x="17.5" y="211.10000000000002" width="6" height="2" fill="#888"/>
<path d="M15.1,206.10000000000002 H16.3 M24.7,206.10000000000002 H25.9" stroke="#111" stroke-width="0.8"/>
<path d="M15.1,208.70000000000002 H16.3 M24.7,208.70000000000002 H25.9" stroke="#111" stroke-width="0.8"/>
<path d="M15.1,211.3 H16.3 M24.7,211.3 H25.9" stroke="#111" stroke-width="0.8"/>
<rect x="16.3" y="218.3" width="8.4" height="10.4" rx="0.8" fill="#fff" stroke="#111" stroke-width="1.4"/>
<rect x="17.5" y="225.3" width="6" height="2" fill="#888"/>
<path d="M15.1,220.3 H16.3 M24.7,220.3 H25.9" stroke="#111" stroke-width="0.8"/>
<path d="M15.1,222.9 H16.3 M24.7,222.9 H25.9" stroke="#111" stroke-width="0.8"/>
<path d="M15.1,225.5 H16.3 M24.7,225.5 H25.9" stroke="#111" stroke-width="0.8"/>
</g>
</svg><!--/CSVG-->
</body></html>
